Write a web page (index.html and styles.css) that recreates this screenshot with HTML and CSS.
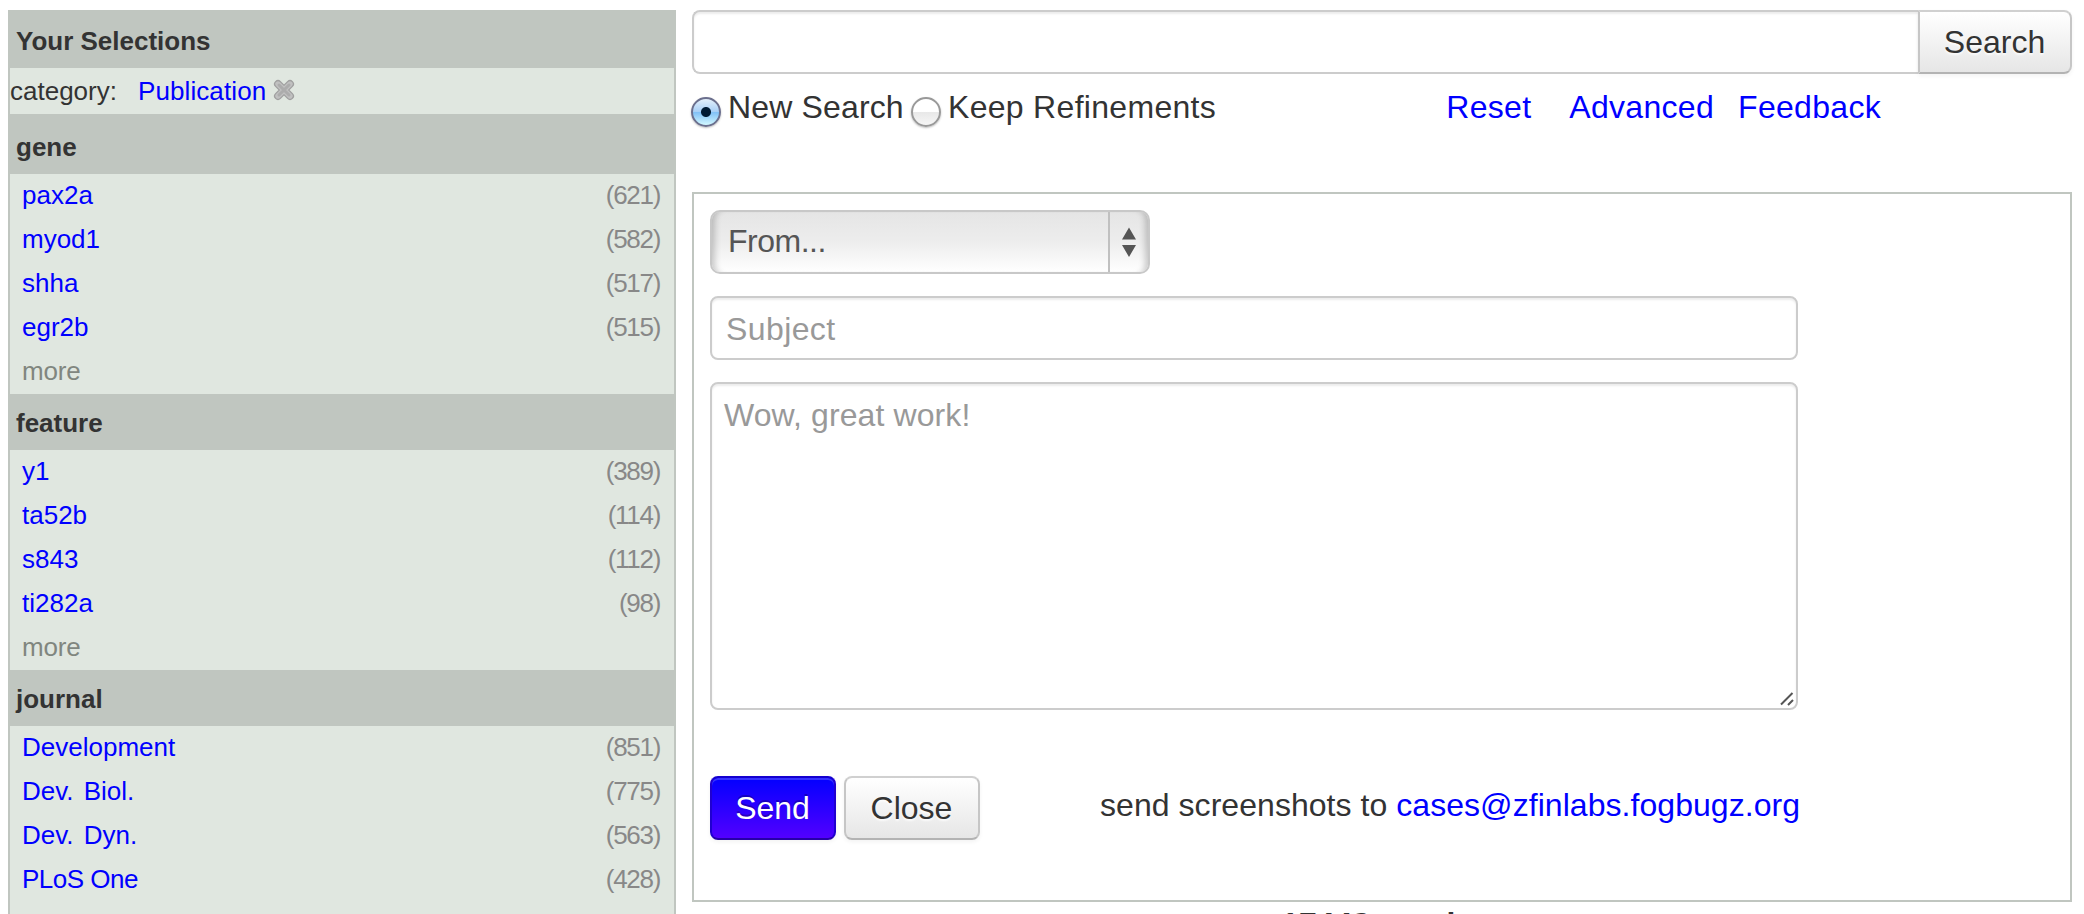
FILE: index.html
```
<!DOCTYPE html>
<html lang="en">
<head>
<meta charset="utf-8">
<title>Publication search</title>
<link rel="stylesheet" href="styles.css">
</head>
<body>
<div class="page">
  <aside class="sidebar">
    <h2 class="facet-title facet-title-first">Your Selections</h2>
    <div class="selection">
      <span>category:</span>
      <a class="selection-value" href="#">Publication</a>
      <svg class="remove" width="22" height="22" viewBox="0 0 22 22"><path d="M5 5L17 17M17 5L5 17" stroke="#a0a0a0" stroke-width="8" stroke-linecap="round"/><path d="M5 5L17 17M17 5L5 17" stroke="#c0c0c0" stroke-width="5.4" stroke-linecap="round"/><path d="M6 6L16 16M16 6L6 16" stroke="#acacac" stroke-width="3" stroke-linecap="round"/></svg>
    </div>
    <h2 class="facet-title facet-title-gene">gene</h2>
    <ul class="facet">
      <li><a href="#">pax2a</a><span class="count">(621)</span></li>
      <li><a href="#">myod1</a><span class="count">(582)</span></li>
      <li><a href="#">shha</a><span class="count">(517)</span></li>
      <li><a href="#">egr2b</a><span class="count">(515)</span></li>
      <li class="more">more</li>
    </ul>
    <h2 class="facet-title">feature</h2>
    <ul class="facet">
      <li><a href="#">y1</a><span class="count">(389)</span></li>
      <li><a href="#">ta52b</a><span class="count">(114)</span></li>
      <li><a href="#">s843</a><span class="count">(112)</span></li>
      <li><a href="#">ti282a</a><span class="count">(98)</span></li>
      <li class="more">more</li>
    </ul>
    <h2 class="facet-title">journal</h2>
    <ul class="facet">
      <li><a href="#">Development</a><span class="count">(851)</span></li>
      <li><a class="abbreviated" href="#">Dev. Biol.</a><span class="count">(775)</span></li>
      <li><a class="abbreviated" href="#">Dev. Dyn.</a><span class="count">(563)</span></li>
      <li><a class="tight" href="#">PLoS One</a><span class="count">(428)</span></li>
    </ul>
  </aside>
  <main class="main">
    <form class="search">
      <input class="search-input" type="text" aria-label="Search">
      <button class="button search-button" type="button">Search</button>
    </form>
    <div class="options">
      <span class="radio radio-on"></span><span class="label-new">New Search</span>
      <span class="radio"></span><span class="label-keep">Keep Refinements</span>
      <nav class="links"><a href="#">Reset</a><a href="#">Advanced</a><a href="#">Feedback</a></nav>
    </div>
    <section class="feedback">
      <div class="select">
        <span class="select-label">From...</span>
        <span class="select-arrows"><svg width="16" height="30" viewBox="0 0 16 30"><path d="M8 0.5L15 12.5H1ZM1 18H15L8 30Z" fill="#555"/></svg></span>
      </div>
      <input class="subject" type="text" placeholder="Subject">
      <div class="message">
        <span>Wow, great work!</span>
        <svg class="grip" width="14" height="14" viewBox="0 0 14 14"><path d="M1 12.5L12.5 1M8 13L13 8" stroke="#555" stroke-width="2"/></svg>
      </div>
      <div class="actions">
        <button class="button send" type="button">Send</button>
        <button class="button close" type="button">Close</button>
        <p class="note">send screenshots to <a href="#">cases@zfinlabs.fogbugz.org</a></p>
      </div>
    </section>
    <p class="results">17448 results</p>
  </main>
</div>
</body>
</html>
```
FILE: styles.css
```
* { box-sizing: border-box; }
html, body { margin: 0; height: 914px; overflow: hidden; background: #fff; }
body { font-family: "Liberation Sans", Arial, sans-serif; color: #333; font-size: 32px; }
a { color: #00f; text-decoration: none; }
ul, h2, p { margin: 0; padding: 0; list-style: none; }
.page { display: flex; gap: 16px; height: 914px; padding: 10px 12px 0 8px; overflow: hidden; }

.sidebar { width: 668px; height: 920px; flex: none; border: 2px solid #c0c6c0; border-top: 0; background: #e0e7e0; font-size: 26px; }
.facet-title { height: 56px; padding-left: 6px; background: #c0c6c0; font-size: 26px; line-height: 59px; }
.facet-title-first { height: 58px; line-height: 62px; }
.facet-title-gene { height: 60px; line-height: 67px; }
.selection { display: flex; height: 46px; line-height: 47px; }
.selection-value { margin-left: 21px; letter-spacing: 0.1px; }
.remove { margin: 11px 0 0 7px; }
.facet li { display: flex; justify-content: space-between; height: 44px; padding: 0 14px 0 12px; line-height: 42px; }
.facet .more { color: #80867f; letter-spacing: -0.2px; }
.abbreviated { word-spacing: 3px; }
.tight { letter-spacing: -0.5px; }
.count { color: #888; letter-spacing: -1.3px; }

.main { display: flex; flex: 1; flex-direction: column; }
.search { display: flex; height: 64px; flex: none; }
.search-input { flex: 1; border: 2px solid #ccc; border-right: 0; border-radius: 8px 0 0 8px; box-shadow: inset 0 2px 2px rgba(0,0,0,.075); outline: 0; }
.button { height: 64px; padding: 0 1px 0 0; border: 2px solid #ccc; border-color: #d0d0d0 #c6c6c6 #b3b3b3; border-radius: 8px; background: linear-gradient(#fff, #e6e6e6); box-shadow: inset 0 2px 0 rgba(255,255,255,.2), 0 2px 4px rgba(0,0,0,.05); color: #333; font: 32px/58px "Liberation Sans", Arial, sans-serif; text-shadow: 0 2px 2px rgba(255,255,255,.75); }
.search-button { width: 154px; border-radius: 0 8px 8px 0; }
.options { display: flex; height: 118px; flex: none; letter-spacing: 0.3px; line-height: 66px; white-space: nowrap; }
.radio { width: 30px; height: 30px; flex: none; margin: 23px 0 0 -1px; border: 2px solid #999; border-radius: 50%; background: linear-gradient(#fff 48%, #e8e8e8 52%, #f6f6f6); box-shadow: 0 1px 2px rgba(0,0,0,.25); }
.radio-on { border-color: #6b6f8d; background: radial-gradient(circle at 50% 50%, #001a33 0 4.5px, transparent 5.5px), linear-gradient(#e4f0fb, #a9d0f6 48%, #82c1f6 52%, #d2f8ff); }
.label-new { width: 191px; padding-left: 7px; letter-spacing: 0.15px; }
.label-keep { padding-left: 7px; }
.links { display: flex; margin-left: auto; padding-right: 191px; }
.links a { margin-left: 24px; }
.links a:nth-child(2) { margin-left: 38px; }

.feedback { height: 710px; flex: none; padding: 16px; border: 2px solid #c0c6c0; }
.select { display: flex; width: 440px; height: 64px; border: 2px solid #c8c8c8; border-radius: 10px; background: linear-gradient(#e5e5e5, #ededed 50%, #fff); box-shadow: inset 8px 0 6px -5px rgba(0,0,0,.2), inset -8px 0 6px -5px rgba(0,0,0,.2); color: #555; line-height: 58px; }
.select-label { flex: 1; padding-left: 16px; letter-spacing: -0.5px; }
.select-arrows { display: flex; width: 40px; align-items: center; justify-content: center; border-left: 2px solid #c0c0c0; }
.subject, .message { display: block; width: 1088px; border: 2px solid #ccc; border-radius: 8px; background: #fff; box-shadow: inset 0 2px 2px rgba(0,0,0,.075); }
.subject { height: 64px; margin-top: 22px; padding: 2px 14px 0; font: 32px "Liberation Sans", Arial, sans-serif; letter-spacing: 0.4px; }
.subject::placeholder { color: #999; opacity: 1; }
.message { position: relative; height: 328px; margin-top: 22px; padding: 0 12px; color: #999; letter-spacing: 0.1px; line-height: 62px; }
.grip { position: absolute; right: 2px; bottom: 2px; }
.actions { display: flex; margin-top: 66px; }
.send { width: 126px; border-color: #1500d0 #2000d0 #2600a8; background: linear-gradient(#00f, #50f); background-origin: border-box; box-shadow: inset 0 2px 0 rgba(255,255,255,.2), 0 2px 4px rgba(0,0,0,.05); color: #fff; text-shadow: 0 -2px 0 rgba(0,0,0,.25); }
.close { width: 136px; margin-left: 8px; }
.note { margin-left: 120px; letter-spacing: 0.05px; line-height: 58px; white-space: nowrap; }
.results { padding: 6px 0 0 1px; font-weight: bold; line-height: 32px; text-align: center; }
```
